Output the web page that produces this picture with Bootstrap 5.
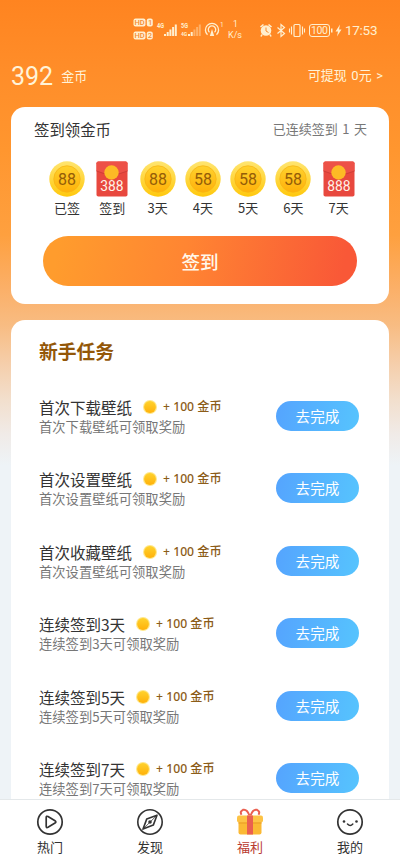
<!DOCTYPE html>
<html lang="zh-CN">
<head>
<meta charset="utf-8">
<meta name="viewport" content="width=device-width, initial-scale=1">
<title>福利</title>
<link href="https://cdn.jsdelivr.net/npm/bootstrap@5.3.0/dist/css/bootstrap.min.css" rel="stylesheet">
<style>
body{font-family:"Noto Sans CJK SC",sans-serif;color:#333;background:#eef3f7}
.app{height:866px;background:linear-gradient(180deg,#ff8420 0,#ff8d29 70px,#ff962f 150px,#fea03f 235px,#fbb069 290px,#f8bc82 325px,#f5cfac 365px,#f2dfcd 400px,#f0ebe8 435px,#eef3f7 465px)}
.status{height:58px;color:#ffefcf;padding:2px 22px 0 132px}
.status svg{display:block}
.topline{height:49px;padding:0 17px 13px 11px;color:#fff3d8}
.coins{font-size:25px;line-height:34px;padding-top:2px}
.latin{font-family:Roboto,"Noto Sans CJK SC",sans-serif}
.withdraw{word-spacing:1.3px}
.t13{font-size:13px;line-height:18px}
.panel{margin:0 11px;background:#fff;border-radius:14px}
.checkin{height:197px}
.checkin-head{padding:11px 22px 0 23px;height:43px}
.streak{font-size:13px;line-height:18px;padding-top:2px;word-spacing:1.6px}
.t15{font-size:15.4px;line-height:22px}
.soft{color:#777}
.days{padding:11px 12px 0 33.5px;height:78px}
.day{width:45.25px}
.day svg{display:block}
.day span{font-size:13px;line-height:18px;margin-top:2px}
.sign{margin:8px 32px 0;height:50px;border-radius:25px;background:linear-gradient(100deg,#ff9c2d 5%,#ff8532 45%,#f95837 95%);color:#fff8ec;font-size:18.6px;font-weight:500;padding:0;border:0;line-height:50px;width:314px}
.tasks{margin-top:16px;border-radius:14px 14px 0 0;min-height:0}
.tasks h2{font-size:18.8px;font-weight:700;color:#935708;line-height:26px;margin:0;padding:18px 0 0 28px}
.list{padding:15px 30px 0 28px}
.task{height:72.5px;padding-top:16.5px}
.task .name{font-size:15.5px;line-height:22px}
.task .reward{font-family:"Noto Sans","Noto Sans CJK SC",sans-serif;font-size:12.2px;line-height:18px;font-weight:500;color:#8c5c18;margin-left:5px}
.task .desc{font-size:13.3px;line-height:18px;color:#777}
.task .dot{margin-left:10px}
.go{width:83px;height:30px;border-radius:15px;background:linear-gradient(100deg,#55a4fe,#56c4fe);color:#fff;font-size:14.6px;line-height:30px;padding:0;border:0;margin-top:5px}
.tabs{height:67px;background:#fff;border-top:1px solid #e4e8ea}
.tabs a{color:#333;font-size:13px;line-height:18px;padding-top:8px}
.tabs a span{margin-top:2px}
.tabs a.active{color:#b93a30}
</style>
<script src="https://cdn.jsdelivr.net/npm/bootstrap@5.3.0/dist/js/bootstrap.bundle.min.js"></script>
</head>
<body>
<svg width="0" height="0" class="position-absolute" aria-hidden="true">
<defs>
<linearGradient id="outer" x1="0" y1="0" x2="0" y2="1"><stop offset="0" stop-color="#ffe570"/><stop offset="1" stop-color="#ffc80d"/></linearGradient>
<linearGradient id="inner" x1="0" y1="0" x2="0" y2="1"><stop offset="0" stop-color="#ffd22d"/><stop offset="1" stop-color="#ffb10a"/></linearGradient>
<symbol id="coin" viewBox="0 0 36 36"><circle cx="18" cy="18" r="17.7" fill="url(#outer)"/><circle cx="18" cy="18" r="13.2" fill="url(#inner)" stroke="#f7b515" stroke-width=".8"/></symbol>
<symbol id="packet" viewBox="0 0 32 36"><rect x=".5" y=".5" width="31" height="35" rx="1.8" fill="#e8483e"/><path d="M.5 2.300Q.5.500 2.300.500H29.700Q31.500.500 31.500 2.300V10Q16 17 .5 10Z" fill="#ed5147"/><path d="M.5 10Q16 17 31.500 10" fill="none" stroke="#c93a33" stroke-width=".8"/><circle cx="15.500" cy="11.500" r="7.200" fill="#fdbb25"/></symbol>
<symbol id="dot" viewBox="0 0 16 16"><circle cx="8" cy="8" r="7" fill="#ffe78a"/><circle cx="8" cy="8" r="5.900" fill="url(#inner)"/></symbol>
</defs>
</svg>
<div class="app d-flex flex-column overflow-hidden">
<div class="status d-flex flex-shrink-0 align-items-center justify-content-between">
<svg width="112" height="30" viewBox="0 0 112 30" fill="#ffefcf" font-family="Roboto,sans-serif">
<g><rect x="1.500" y="3.500" width="12" height="8" rx="2"/><rect x="14.800" y="3.500" width="6" height="8" rx="2"/><rect x="1.500" y="16.500" width="12" height="8" rx="2"/><rect x="14.800" y="16.500" width="6" height="8" rx="2"/></g>
<g fill="#f58b32" font-size="7.500" font-weight="500"><text x="2.400" y="10.200">HD</text><text x="16" y="10.200">1</text><text x="2.400" y="23.200">HD</text><text x="15.800" y="23.200">2</text></g>
<text x="25" y="12.500" font-size="6.500" font-weight="700" textLength="7" lengthAdjust="spacingAndGlyphs">4G</text>
<path d="M32 19h2v2h-2zM34.700 17h2v4h-2zM37.400 14.500h2V21h-2zM40.100 12h2v9h-2zM42.800 9.500h2V21h-2z"/>
<text x="49" y="12.500" font-size="6.500" font-weight="700" textLength="7" lengthAdjust="spacingAndGlyphs">5G</text><text x="49" y="21" font-size="5" font-weight="700">4G</text>
<path d="M56 19h2v2h-2zM58.700 17h2v4h-2z"/><path opacity=".4" d="M61.400 14.500h2V21h-2zM64.100 12h2v9h-2zM66.800 9.500h2V21h-2z"/>
<g fill="none" stroke="#ffefcf" stroke-width="1.300"><path d="M75.500 19.800a6.600 6.600 0 1 1 9 0"/><path d="M77.500 17.300a3.700 3.700 0 1 1 5 0"/></g><path d="M80 14l2.200 7h-4.400z"/>
<text x="88" y="12" font-size="6.500">1</text><text x="101" y="11.500" font-size="8.500">1</text><text x="96" y="23" font-size="9" textLength="14">K/s</text>
</svg>
<svg width="119" height="20" viewBox="0 0 119 20" fill="#ffefcf" font-family="Roboto,sans-serif">
<circle cx="7" cy="10.500" r="5.300"/><path d="M1.500 7L4.500 4.500M12.500 7L9.500 4.500M3 14.500l-1 2M11 14.500l1 2" stroke="#ffefcf" stroke-width="1.600"/><path d="M7 7.500V11l2.500 1.500" stroke="#f98b30" fill="none"/>
<path d="M18.500 7.500l7 6-3.500 3V4.500l3.500 3-7 6" fill="none" stroke="#ffefcf" stroke-width="1.200"/>
<rect x="35" y="4.500" width="6" height="12" rx="1" fill="none" stroke="#ffefcf" stroke-width="1.200"/><path d="M32.500 6.500v8M43.500 6.500v8M30.500 8.500v4M45.500 8.500v4" stroke="#ffefcf" stroke-width="1.100"/>
<rect x="50.500" y="4.500" width="20" height="12" rx="2.500" fill="none" stroke="#ffefcf"/><path d="M72 8.500h1.500v4H72z"/><text x="52" y="14.400" font-size="10.500" textLength="17">100</text>
<path d="M81 4.500l-4.500 7H79l-1 5 4.500-7H80z"/>
<text x="86" y="15.300" font-size="13.500" textLength="32.500">17:53</text>
</svg>
</div>
<header class="topline d-flex flex-shrink-0 align-items-center justify-content-between">
<div class="d-flex align-items-center"><span class="coins latin">392</span><span class="t13 ms-1 ps-1">金币</span></div>
<span class="t13 latin withdraw">可提现 0元 &gt;</span>
</header>
<section class="panel checkin flex-shrink-0">
<div class="checkin-head d-flex justify-content-between"><span class="t15">签到领金币</span><span class="streak soft">已连续签到 1 天</span></div>
<div class="days d-flex" id="days"></div>
<button class="btn sign d-block" type="button">签到</button>
</section>
<section class="panel tasks flex-grow-1 overflow-hidden">
<h2>新手任务</h2>
<div class="list" id="tasks"></div>
</section>
<nav class="tabs d-flex flex-shrink-0">
<a href="#" class="col-3 d-flex flex-column align-items-center text-decoration-none"><svg width="28" height="28" viewBox="0 0 28 28" fill="none" stroke="#333" stroke-width="1.700"><circle cx="14" cy="14" r="12.200"/><path d="M10.200 9.600q0-2 1.800-1l7 4.200q1.700 1.200 0 2.200l-7 4.200q-1.800 1-1.800-1z"/></svg><span>热门</span></a>
<a href="#" class="col-3 d-flex flex-column align-items-center text-decoration-none"><svg width="28" height="28" viewBox="0 0 28 28" fill="none" stroke="#333" stroke-width="1.600" stroke-linejoin="round"><circle cx="14" cy="14" r="12.200"/><path d="M21 7.200l-3.700 9.900-10.300 4 3.700-10z"/><path d="M7 21.100L21 7.200" stroke-width=".8"/><circle cx="14" cy="14" r="1.800" fill="#333" stroke="none"/></svg><span>发现</span></a>
<a href="#" class="col-3 active d-flex flex-column align-items-center text-decoration-none"><svg width="28" height="28" viewBox="0 0 28 28"><path d="M2.500 14h23v10.500a2 2 0 0 1-2 2h-19a2 2 0 0 1-2-2z" fill="#fbb934"/><rect x="1" y="7.500" width="26" height="7" rx="2" fill="#fdc345"/><path d="M2.500 14.500h23v1h-23z" fill="#e99b24"/><path d="M11 7.500h6v19h-6z" fill="#ea6050"/><path d="M13.500 7.500Q11 .8 7 1.800 3.500 3.500 5.500 6.800M14.500 7.500Q17 .8 21 1.800 24.500 3.500 22.500 6.800" fill="none" stroke="#ea6050" stroke-width="2"/></svg><span>福利</span></a>
<a href="#" class="col-3 d-flex flex-column align-items-center text-decoration-none"><svg width="28" height="28" viewBox="0 0 28 28" fill="none" stroke="#333" stroke-width="1.700" stroke-linecap="round"><circle cx="14" cy="14" r="12.200"/><path d="M11.500 16q2.800 3 5.300 0" stroke-width="1.500"/><g fill="#333" stroke="none"><circle cx="8" cy="13.500" r="1.300"/><circle cx="20.500" cy="13.500" r="1.300"/></g></svg><span>我的</span></a>
</nav>
</div>
<script>
const days=[['88','已签'],['388','签到'],['88','3天'],['58','4天'],['58','5天'],['58','6天'],['888','7天']];
document.getElementById('days').innerHTML=days.map(([n,label])=>{
const red=n.length===3;
return `<div class="day d-flex flex-column align-items-center"><svg class="latin" width="36" height="36" viewBox="0 0 36 36"><use href="#${red?'packet':'coin'}" x="${red?2:0}" width="${red?32:36}" height="36"/><text x="18" y="${red?30:24}" text-anchor="middle" font-size="${red?13.8:16}" fill="${red?'#fff3e8':'#945d08'}">${n}</text></svg><span>${label}</span></div>`}).join('');
const tasks=[['首次下载壁纸','首次下载壁纸可领取奖励'],['首次设置壁纸','首次设置壁纸可领取奖励'],['首次收藏壁纸','首次设置壁纸可领取奖励'],['连续签到3天','连续签到3天可领取奖励'],['连续签到5天','连续签到5天可领取奖励'],['连续签到7天','连续签到7天可领取奖励']];
document.getElementById('tasks').innerHTML=tasks.map(([name,desc])=>`<div class="task d-flex justify-content-between align-items-start"><div><div class="d-flex align-items-center"><span class="name">${name}</span><svg class="dot" width="16" height="16"><use href="#dot"/></svg><span class="reward">+ 100 金币</span></div><div class="desc">${desc}</div></div><button class="btn go" type="button">去完成</button></div>`).join('');
</script>
</body>
</html>
